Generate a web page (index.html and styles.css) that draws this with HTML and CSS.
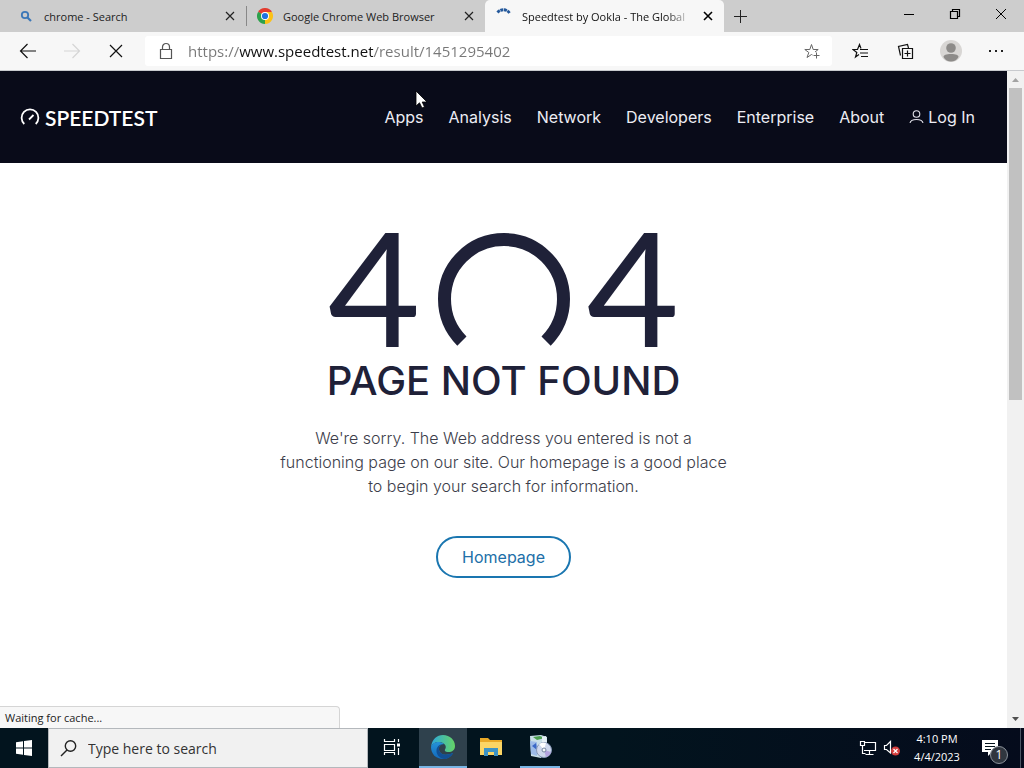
FILE: index.html
```html
<!doctype html>
<html lang="en">
<head>
    <meta charset="utf-8">
    <title>Speedtest by Ookla - The Global Broadband Speed Test</title>
    <meta name="viewport" content="width=device-width, initial-scale=1">
    <link rel="stylesheet" href="styles.css">
</head>

<body>
<div class="browser">
    <div class="tab-strip">
        <div class="tab">
            <svg class="tab-icon" viewBox="0 0 16 16" fill="none" stroke="#3d78b8" stroke-width="1.800">
                <circle cx="7" cy="7" r="3.200"/>
                <path d="M9.500 9.500L13 13" stroke-width="2.200"/>
            </svg>
            <span class="tab-title">chrome - Search</span>
            <button class="tab-close" aria-label="Close tab">
                <svg width="10" height="10" viewBox="0 0 10 10" stroke="#222" stroke-width="1.200"><path d="M1 1L9 9M9 1L1 9"/></svg>
            </button>
        </div>
        <div class="tab tab-divided">
            <svg class="tab-icon" viewBox="0 0 16 16">
                <path d="M8 8L1.070 4A8 8 0 0 1 14.930 4Z" fill="#e33b2e"/>
                <path d="M8 8L14.930 4A8 8 0 0 1 8 16Z" fill="#fbc116"/>
                <path d="M8 8L8 16A8 8 0 0 1 1.070 4Z" fill="#2da14c"/>
                <path d="M8 4H14.930L11.500 10L8 16L11.500 8Z" fill="#fbc116"/>
                <path d="M1.070 4L4.500 10L8 12L8 8Z" fill="#2da14c"/>
                <circle cx="8" cy="8" r="4" fill="#fff"/>
                <circle cx="8" cy="8" r="3.100" fill="#1f72e0"/>
            </svg>
            <span class="tab-title">Google Chrome Web Browser</span>
            <button class="tab-close" aria-label="Close tab">
                <svg width="10" height="10" viewBox="0 0 10 10" stroke="#222" stroke-width="1.200"><path d="M1 1L9 9M9 1L1 9"/></svg>
            </button>
        </div>
        <div class="tab tab-active">
            <svg class="tab-icon" viewBox="0 0 16 16" fill="none" stroke="#24589b" stroke-width="2.800" stroke-dasharray="3 0.600">
                <path d="M1.500 4.500A7.500 7.500 0 0 1 13.500 5"/>
            </svg>
            <span class="tab-title">Speedtest by Ookla - The Global</span>
            <button class="tab-close" aria-label="Close tab">
                <svg width="10" height="10" viewBox="0 0 10 10" stroke="#000" stroke-width="1.600"><path d="M1 1L9 9M9 1L1 9"/></svg>
            </button>
        </div>
        <button class="new-tab" aria-label="New tab">
            <svg width="14" height="14" viewBox="0 0 14 14" stroke="#222"><path d="M7.500 1V14M1 7.500H14"/></svg>
        </button>
        <div class="window-controls">
            <button aria-label="Minimize">
                <svg width="12" height="12" viewBox="0 0 12 12" stroke="#000"><path d="M1 6.500H11"/></svg>
            </button>
            <button aria-label="Restore">
                <svg width="12" height="12" viewBox="0 0 12 12" fill="none" stroke="#000" stroke-width="1.200"><path d="M1.500 3.500H8.500V10.500H1.500ZM3.500 3.500V1.500H10.500V8.500H8.500"/></svg>
            </button>
            <button aria-label="Close">
                <svg width="12" height="12" viewBox="0 0 12 12" stroke="#000"><path d="M1 1L11 11M11 1L1 11"/></svg>
            </button>
        </div>
    </div>

    <div class="toolbar">
        <button class="tool" aria-label="Back">
            <svg width="18" height="16" viewBox="0 0 18 16" fill="none" stroke="#111" stroke-width="1.200"><path d="M17 8H2M8.500 1L1.500 8L8.500 15"/></svg>
        </button>
        <button class="tool" aria-label="Forward" disabled>
            <svg width="18" height="16" viewBox="0 0 18 16" fill="none" stroke="#d5d5d5" stroke-width="1.200"><path d="M1 8H16M9.500 1L16.500 8L9.500 15"/></svg>
        </button>
        <button class="tool" aria-label="Stop">
            <svg width="14" height="14" viewBox="0 0 14 14" stroke="#111" stroke-width="1.200"><path d="M1 1L13 13M13 1L1 13"/></svg>
        </button>
        <div class="address">
            <svg width="14" height="18" viewBox="0 0 14 18" fill="none" stroke="#555" stroke-width="1.200"><path d="M1.500 7.500H12.500V16.500H1.500ZM3.500 7.500V5A3.500 3.500 0 0 1 10.500 5V7.500"/></svg>
            <input class="address-input" type="text" aria-label="Address" value="https://www.speedtest.net/result/1451295402">
            <button class="favorite" aria-label="Add to favorites">
                <svg width="16" height="16" viewBox="0 0 16 16" fill="none" stroke="#666"><path d="M8.500 12L7.500 11.500L3 14.500L4.800 9.500L0.800 6.500H5.800L7.500 1.500L9.200 6.500H14.200L11 9M12.500 9.500V15.500M9.500 12.500H15.500"/></svg>
            </button>
        </div>
        <button class="tool tool-right" aria-label="Favorites">
            <svg width="17" height="16" viewBox="0 0 17 16" fill="none" stroke="#111" stroke-width="1.200"><path d="M7 11.500L3.500 14L4.800 9.500L1 6.500H5.500L7.500 1.500L9 5.500M8 6.500H16M8 10H16M9 13.500H16"/></svg>
        </button>
        <button class="tool tool-right" aria-label="Collections">
            <svg width="17" height="17" viewBox="0 0 17 17" fill="none" stroke="#111" stroke-width="1.200"><path d="M5.500 5.500H15.500V15.500H5.500ZM10.500 7.500V13.500M7.500 10.500H13.500M3.500 12.500L1.500 3.500L10.500 1.500L11.500 5"/></svg>
        </button>
        <button class="tool tool-right" aria-label="Profile">
            <svg width="22" height="22" viewBox="0 0 22 22">
                <circle cx="11" cy="11" r="11" fill="#d8d6d4"/>
                <circle cx="11" cy="8" r="4.800" fill="#8d8b89"/>
                <path d="M3.500 17C3.500 15 6 14 11 14S18.500 15 18.500 17C17 20 14 21.500 11 21.500S5 20 3.500 17Z" fill="#8d8b89"/>
            </svg>
        </button>
        <button class="tool tool-right" aria-label="Settings and more">
            <svg width="16" height="4" viewBox="0 0 16 4" fill="#222"><path d="M1 1H3V3H1ZM7 1H9V3H7ZM13 1H15V3H13Z"/></svg>
        </button>
    </div>

    <div class="viewport">
        <div class="page">
            <header class="site-header">
                <a class="brand" href="#">
                    <svg width="20" height="18" viewBox="0 0 20 18" fill="none" stroke="#fff" stroke-width="1.800">
                        <path d="M4.300 16A8.400 8.400 0 1 1 15.700 16M9 11.500L13.500 7"/>
                    </svg>
                    <span>SPEEDTEST</span>
                </a>
                <nav class="site-nav">
                    <a href="#">Apps</a>
                    <a href="#">Analysis</a>
                    <a href="#">Network</a>
                    <a href="#">Developers</a>
                    <a href="#">Enterprise</a>
                    <a href="#">About</a>
                    <a class="login" href="#">
                        <svg width="15" height="14" viewBox="0 0 15 14" fill="none" stroke="#e4e4ec" stroke-width="1.100"><circle cx="7.500" cy="4" r="3.300"/><path d="M1 13C1.500 10.500 4 9.500 7.500 9.500S13.500 10.500 14 13"/></svg>
                        Log In
                    </a>
                </nav>
            </header>

            <main class="error">
                <div class="error-code">
                    <span>4</span>
                    <svg width="134" height="114" viewBox="0 0 134 114" fill="none" stroke="#1f2138" stroke-width="13">
                        <path d="M24.900 109.100A59.500 59.500 0 1 1 109.100 109.100"/>
                    </svg>
                    <span>4</span>
                </div>
                <h1 class="error-title">PAGE NOT FOUND</h1>
                <p class="error-text">We're sorry. The Web address you entered is not a<br>functioning page on our site. Our homepage is a good place<br>to begin your search for information.</p>
                <a class="homepage-link" href="#">Homepage</a>
            </main>
        </div>

        <div class="scrollbar">
            <svg class="scroll-arrow" viewBox="0 0 17 17" fill="#a3a3a3"><path d="M5 11H12L8.500 7Z"/></svg>
            <div class="scroll-track"><div class="scroll-thumb"></div></div>
            <svg class="scroll-arrow" viewBox="0 0 17 17" fill="#505050"><path d="M5 6H12L8.500 10Z"/></svg>
        </div>
        <div class="status">Waiting for cache...</div>
    </div>
</div>

<div class="taskbar">
    <button class="start" aria-label="Start">
        <svg width="16" height="16" viewBox="0 0 16 16" fill="#fff"><path d="M0 2.200L7 1.200V7.500H0ZM8 1L16 0V7.500H8ZM0 8.500H7V14.800L0 13.800ZM8 8.500H16V16L8 15Z"/></svg>
    </button>
    <label class="search">
        <svg width="17" height="18" viewBox="0 0 17 18" fill="none" stroke="#222" stroke-width="1.400"><circle cx="10.500" cy="7" r="5.200"/><path d="M7 11L1 17"/></svg>
        <input class="search-input" type="text" placeholder="Type here to search" aria-label="Search">
    </label>
    <button class="task" aria-label="Task view">
        <svg width="18" height="16" viewBox="0 0 18 16" fill="none" stroke="#fff" stroke-width="1.200"><path d="M1.500 0V2.500H11.500V0M1.500 5.500H11.500V11.500H1.500ZM1.500 16V13.500H11.500V16M15.500 0V3M15.500 9V16"/><path d="M14 4.500H17V7.500H14Z" fill="#fff" stroke="none"/></svg>
    </button>
    <button class="task task-active" aria-label="Microsoft Edge">
        <svg width="24" height="24" viewBox="0 0 24 24">
            <defs>
                <linearGradient id="edge-top" x1="0" y1="0" x2="1" y2="0"><stop offset="0" stop-color="#2da8dd"/><stop offset="1" stop-color="#65d365"/></linearGradient>
                <linearGradient id="edge-body" x1="0" y1="0" x2="0" y2="1"><stop offset="0" stop-color="#2593d8"/><stop offset="1" stop-color="#1268bb"/></linearGradient>
            </defs>
            <path d="M0 12C1 4 6 0 12 0C19 0 24 5 24 11C24 15 21 17 17.500 17C14 17 13 15.500 14.500 13.500C16 10 12 7 8 7C4 7 1 9 0 12Z" fill="url(#edge-top)"/>
            <path d="M0 12C1 8.500 4 7 8 7C10 7 12 8 13 9C9 9 7.500 12 8 15C9 20 15 21 22 18C20 22 16 24 12 24C5 24 0 19 0 12Z" fill="url(#edge-body)"/>
            <path d="M13 9C9 9 7.500 12 8 15C9 20 15 21 22 18C20 22 16 24 13 24C8 23 5 19 5.500 15C6 11 9 9 13 9Z" fill="#124f94"/>
        </svg>
    </button>
    <button class="task" aria-label="File Explorer">
        <svg width="22" height="20" viewBox="0 0 22 20">
            <path d="M0 1H8L10 3H22V18H0Z" fill="#e9a927"/>
            <path d="M0 5H22V18H0Z" fill="#fbd565"/>
            <path d="M4 19V11H18V19H14V15H8V19Z" fill="#3d93c5"/>
        </svg>
    </button>
    <button class="task task-open" aria-label="Installer">
        <svg width="26" height="26" viewBox="0 0 26 26">
            <path d="M3 2L14 1L20 3V9L14 24L4 22Z" fill="#c9dfe8"/>
            <path d="M6 3L13 2L18 4L10 6Z" fill="#4c9f50"/>
            <path d="M3 7L10 8V22L4 20Z" fill="#9dbbe8"/>
            <path d="M5 12L9 9L10 16Z" fill="#3b68c6"/>
            <path d="M15 3L19 2L20 8L15 9Z" fill="#e5eff5"/>
            <circle cx="17" cy="16" r="7.500" fill="#cfd8ed" stroke="#8798b8"/>
            <path d="M17 16L12 10A7.500 7.500 0 0 1 19 9Z" fill="#fff"/>
            <path d="M17 16L24 18A7.500 7.500 0 0 1 19 23Z" fill="#b4a4df"/>
            <circle cx="17" cy="16" r="2" fill="#f6f8fa" stroke="#7485a0"/>
        </svg>
    </button>
    <div class="tray">
        <svg width="18" height="16" viewBox="0 0 18 16" fill="none" stroke="#fff" stroke-width="1.200"><path d="M5 2.500H16.500V10.500H5M10.500 10.500V14M6.500 14.500H14.500M1.500 1.500H5.500V5.500H1.500ZM3.500 5.500V13.500H6.500"/></svg>
        <svg width="18" height="16" viewBox="0 0 18 16" fill="none" stroke="#fff" stroke-width="1.200">
            <path d="M1.500 5.500H3.500L7.500 1.500V13L3.500 9.500H1.500Z"/>
            <circle cx="12.500" cy="11" r="4.500" fill="#d43c3c" stroke="none"/>
            <path d="M10.500 9L14.500 13M14.500 9L10.500 13"/>
        </svg>
        <div class="clock">
            <span>4:10 PM</span>
            <span>4/4/2023</span>
        </div>
        <button class="notifications" aria-label="Notifications">
            <svg width="18" height="18" viewBox="0 0 18 18"><path d="M1 1H17V13H11L7 17V13H1Z" fill="#fff"/><path d="M4 4.500H14M4 7.500H14M4 10.500H10" stroke="#04131d"/></svg>
            <span class="badge">1</span>
        </button>
    </div>
</div>

<svg class="pointer" width="13" height="19" viewBox="0 0 13 19"><path d="M1 1V16L4.500 12.800L7 18L9.500 17L7.200 12H12Z" fill="#fff" stroke="#000" stroke-width="0.800"/></svg>
</body>
</html>
```
FILE: styles.css
```css
* {
    box-sizing: border-box;
}

body {
    display: flex;
    flex-direction: column;
    height: 100vh;
    margin: 0;
    overflow: hidden;
    font-family: "Open Sans", "Noto Sans", sans-serif;
    font-size: 12px;
    color: #222;
}

button {
    display: flex;
    align-items: center;
    justify-content: center;
    padding: 0;
    border: 0;
    background: none;
    font: inherit;
}

input {
    min-width: 0;
    padding: 0;
    border: 0;
    outline: 0;
    background: none;
    font: inherit;
}

svg {
    flex-shrink: 0;
}

.browser {
    display: flex;
    flex: 1;
    flex-direction: column;
    min-height: 0;
}

/* tabs */
.tab-strip {
    display: flex;
    height: 32px;
    background: #cdcdcd;
}

.tab {
    display: flex;
    flex: 0 1 239px;
    align-items: center;
    gap: 10px;
    min-width: 0;
    padding: 0 10px 0 11px;
}

.tab:first-child {
    flex-basis: 246px;
    padding-left: 18px;
}

.tab-divided {
    background: linear-gradient(#888, #888) 0 50% / 1px 20px no-repeat;
}

.tab-active {
    border-radius: 5px 5px 0 0;
    background: #f7f7f7;
    color: #111;
}

.tab-icon {
    width: 16px;
    height: 16px;
}

.tab-title {
    flex: 1;
    overflow: hidden;
    font-size: 11px;
    white-space: nowrap;
}

.tab-active .tab-title {
    -webkit-mask-image: linear-gradient(to right, #000 85%, transparent);
    mask-image: linear-gradient(to right, #000 85%, transparent);
}

.tab-close {
    width: 12px;
    height: 16px;
}

.new-tab {
    width: 32px;
}

.window-controls {
    display: flex;
    margin-left: auto;
}

.window-controls button {
    width: 46px;
    padding-bottom: 4px;
}

/* toolbar */
.toolbar {
    display: flex;
    align-items: center;
    height: 39px;
    padding: 0 6px;
    border-bottom: 1px solid #c8cace;
    background: #f7f7f7;
}

.tool {
    width: 44px;
    height: 32px;
}

.tool-right {
    width: 45px;
}

.address {
    display: flex;
    flex: 1;
    align-items: center;
    gap: 15px;
    height: 30px;
    margin: 0 6px 0 7px;
    padding: 0 12px 0 14px;
    border-radius: 3px;
    background: #fff;
}

/* the host name is darker than the rest of the address */
.address-input {
    flex: 1;
    height: 24px;
    background: linear-gradient(to right, #777 52px, #111 52px, #111 185px, #777 185px);
    -webkit-background-clip: text;
    background-clip: text;
    color: transparent;
    font-size: 15px;
}

/* page */
.viewport {
    position: relative;
    display: flex;
    flex: 1;
    min-height: 0;
}

.page {
    flex: 1;
    overflow: hidden;
    background: #fff;
    font-family: Inter, "Open Sans", sans-serif;
    font-size: 16px;
}

.site-header {
    display: flex;
    align-items: center;
    justify-content: space-between;
    height: 92px;
    padding: 0 32px 0 20px;
    background: #090b19;
}

.site-header a {
    color: #ededf4;
    text-decoration: none;
}

.site-header .brand {
    display: flex;
    align-items: center;
    gap: 5px;
    color: #fff;
    font-family: Lato, sans-serif;
    font-size: 21px;
    font-weight: 600;
}

.site-nav {
    display: flex;
    gap: 25px;
}

.login {
    display: flex;
    align-items: center;
    gap: 4px;
}

.error {
    display: flex;
    flex-direction: column;
    align-items: center;
    padding-top: 69px;
    color: #1f2138;
}

.error-code {
    display: flex;
    gap: 16px;
    height: 114px;
    font-family: Lato, sans-serif;
    font-size: 160px;
    line-height: 106px;
}

.error-title {
    margin: 12px 0 22px;
    font-size: 40px;
    font-weight: 500;
    line-height: 46px;
}

.error-text {
    margin: 0 0 38px;
    color: #3c3d4a;
    font-weight: 300;
    line-height: 24px;
    text-align: center;
}

.homepage-link {
    padding: 0 24px;
    border: 2px solid #1a76b0;
    border-radius: 21px;
    color: #216fa8;
    line-height: 38px;
    text-decoration: none;
}

.scrollbar {
    display: flex;
    flex-direction: column;
    width: 17px;
    background: #f1f1f1;
}

.scroll-arrow {
    width: 17px;
    height: 17px;
}

.scroll-track {
    flex: 1;
    padding: 0 2px;
}

.scroll-thumb {
    height: 50%;
    background: #c1c1c1;
}

.status {
    position: absolute;
    bottom: 0;
    left: 0;
    width: 340px;
    padding-left: 5px;
    border: 1px solid #d5d5d5;
    border-width: 1px 1px 0 0;
    border-radius: 0 4px 0 0;
    background: #f7f7f7;
    font-size: 11px;
    line-height: 21px;
}

/* taskbar */
.taskbar {
    display: flex;
    height: 40px;
    background: linear-gradient(to right, #02141e, #02141e 60%, #050b1c);
    color: #fff;
}

.start {
    width: 48px;
}

.search {
    display: flex;
    flex: 0 1 320px;
    align-items: center;
    gap: 11px;
    padding-left: 11px;
    border: 1px solid #b4b8bc;
    background: #f1f1f1;
}

.search-input {
    flex: 1;
    font-size: 14px;
}

.search-input::placeholder {
    color: #333;
    opacity: 1;
}

.task {
    width: 48px;
    border-bottom: 2px solid transparent;
}

.task:nth-of-type(2) {
    margin-right: 3px;
}

.task-active {
    border-color: #78b4e4;
    background: #2f414d;
}

.task-open {
    width: 40px;
    margin-left: 5px;
    border-color: #78b4e4;
}

.tray {
    display: flex;
    align-items: center;
    gap: 6px;
    margin-left: auto;
}

.clock {
    display: flex;
    flex-direction: column;
    width: 60px;
    font-size: 11px;
    line-height: 18px;
    text-align: center;
}

.notifications {
    position: relative;
    width: 48px;
    height: 40px;
    margin-right: 3px;
    padding-right: 14px;
    border-right: 1px solid #4b5664;
    color: #fff;
}

.badge {
    position: absolute;
    right: 12px;
    bottom: 4px;
    width: 18px;
    border: 1px solid #8b929b;
    border-radius: 50%;
    background: #30363f;
    font-size: 12px;
    line-height: 16px;
    text-align: center;
}

.pointer {
    position: absolute;
    top: 90px;
    left: 415px;
}
```
